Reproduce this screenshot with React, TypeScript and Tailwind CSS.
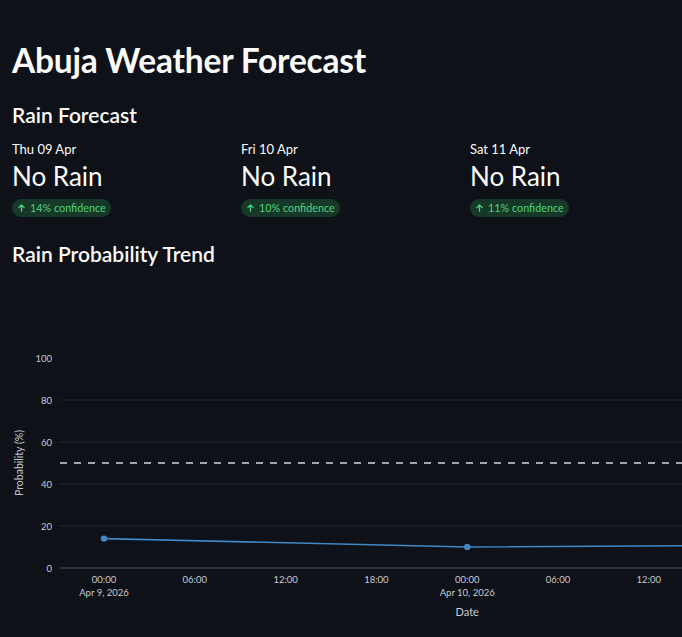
import React from "react";

type DayForecast = {
  label: string;
  verdict: string;
  confidence: number;
};

const days: DayForecast[] = [
  { label: "Thu 09 Apr", verdict: "No Rain", confidence: 14 },
  { label: "Fri 10 Apr", verdict: "No Rain", confidence: 10 },
  { label: "Sat 11 Apr", verdict: "No Rain", confidence: 11 },
];

// chart points: hours since Apr 9 00:00 -> probability
const points = [
  { h: 0, p: 14 },
  { h: 24, p: 10 },
  { h: 48, p: 11 },
];

function ArrowUp() {
  return (
    <svg width="9" height="10" viewBox="0 0 10 10" fill="none" stroke="currentColor" strokeWidth="1.4" strokeLinecap="round" strokeLinejoin="round">
      <path d="M5 8.5V1.8M2 4.6L5 1.6l3 3" />
    </svg>
  );
}

function Metric({ day }: { day: DayForecast }) {
  return (
    <div className="flex flex-col">
      <div className="text-[13px] leading-[18px] text-[#fafafa]">{day.label}</div>
      <div className="text-[26px] leading-[36px] text-[#fafafa]">{day.verdict}</div>
      <div className="mt-[1px]">
        <span className="inline-flex items-center gap-[4px] rounded-full bg-[#173828] px-[5px] h-[18px] text-[10.8px] text-[#4bd57a]">
          <ArrowUp />
          {day.confidence}% confidence
        </span>
      </div>
    </div>
  );
}

function TrendChart() {
  const x0 = 104;
  const pxPerHour = 90.8 / 6;
  const y0 = 288; // svg y for 0%
  const pxPerPct = 2.1;
  const xs = (h: number) => x0 + h * pxPerHour;
  const ys = (p: number) => y0 - p * pxPerPct;
  const ticks = [0, 6, 12, 18, 24, 30, 36];
  const line = points.map((pt) => `${xs(pt.h)},${ys(pt.p)}`).join(" ");

  return (
    <svg width="682" height="357" className="block" style={{ fontFamily: "Lato, 'Open Sans', sans-serif" }}>
      {[20, 40, 60, 80].map((p) => (
        <line key={p} x1="60" x2="682" y1={ys(p)} y2={ys(p)} stroke="#23262e" strokeWidth="1" />
      ))}
      <line x1="60" x2="682" y1={y0} y2={y0} stroke="#3a3d46" strokeWidth="1.5" />
      <line x1="60" x2="682" y1={ys(50)} y2={ys(50)} stroke="#a3a5ab" strokeWidth="1.8" strokeDasharray="7 7" />
      {[0, 20, 40, 60, 80, 100].map((p) => (
        <text key={p} x="52" y={ys(p) + 3.5} textAnchor="end" fontSize="9.5" fill="#c9cbd0">
          {p}
        </text>
      ))}
      <text
        transform={`translate(23 ${ys(50)}) rotate(-90)`}
        textAnchor="middle"
        fontSize="10.5"
        fill="#c9cbd0"
      >
        Probability (%)
      </text>
      {ticks.map((h) => {
        const label = `${String(h % 24).padStart(2, "0")}:00`;
        return (
          <g key={h}>
            <text x={xs(h)} y={y0 + 15} textAnchor="middle" fontSize="9.5" fill="#c9cbd0">
              {label}
            </text>
            {h % 24 === 0 && (
              <text x={xs(h)} y={y0 + 28} textAnchor="middle" fontSize="9.5" fill="#c9cbd0">
                {h === 0 ? "Apr 9, 2026" : "Apr 10, 2026"}
              </text>
            )}
          </g>
        );
      })}
      <text x={xs(24)} y={y0 + 48} textAnchor="middle" fontSize="11" fill="#c9cbd0">
        Date
      </text>
      <polyline points={line} fill="none" stroke="#3f87c5" strokeWidth="1.6" />
      {points.map((pt) => (
        <circle key={pt.h} cx={xs(pt.h)} cy={ys(pt.p)} r="3.2" fill="#3f87c5" />
      ))}
    </svg>
  );
}

export default function App() {
  return (
    <div
      className="w-[682px] h-[637px] overflow-hidden bg-[#0e1117] text-[#fafafa]"
      style={{ fontFamily: "Lato, 'Open Sans', sans-serif" }}
    >
      <div className="pl-3 pt-[38px]">
        <h1 className="text-[33.5px] leading-[44px] font-bold tracking-[-0.2px]">Abuja Weather Forecast</h1>
        <h3 className="mt-[18px] text-[21px] leading-[30px] font-semibold">Rain Forecast</h3>
        <div className="mt-[10px] grid grid-cols-[229px_229px_229px]">
          {days.map((d) => (
            <Metric key={d.label} day={d} />
          ))}
        </div>
        <h3 className="mt-[20px] text-[21px] leading-[30px] font-semibold">Rain Probability Trend</h3>
      </div>
      <div className="mt-[11px]">
        <TrendChart />
      </div>
    </div>
  );
}
